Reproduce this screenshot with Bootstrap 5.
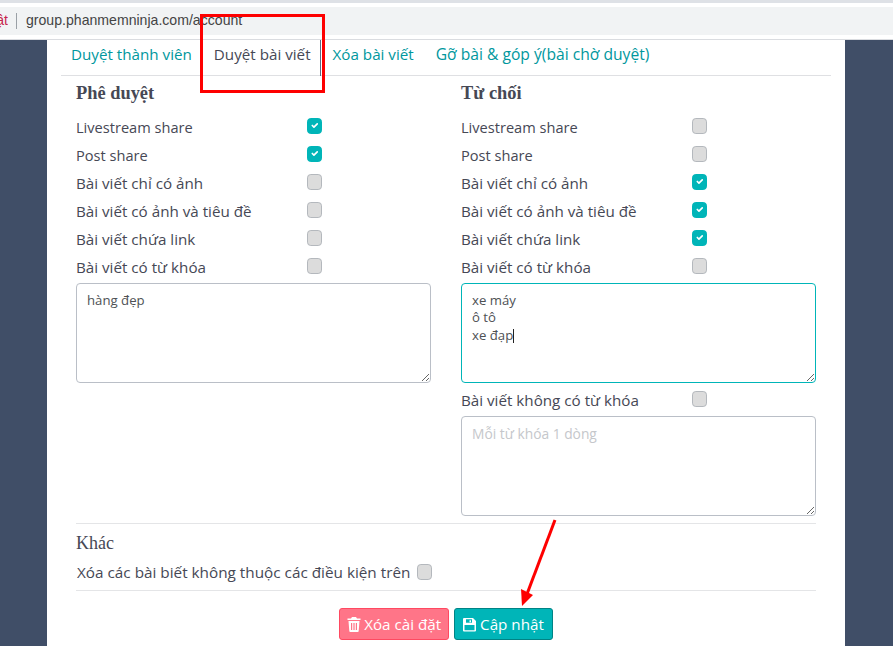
<!DOCTYPE html>
<html lang="vi">
<head>
  <meta charset="UTF-8">
  <meta name="viewport" content="width=device-width, initial-scale=1.0">
  <title>Duyệt bài viết</title>
  <link href="https://cdn.jsdelivr.net/npm/bootstrap@5.3.0/dist/css/bootstrap.min.css" rel="stylesheet">
  <style>
    html, body { height: 646px; overflow: hidden; }
    body {
      position: relative;
      background: #fff;
      color: #464855;
      font-family: "Open Sans", "Noto Sans", sans-serif;
      font-size: 15.2px;
    }
    /* browser chrome */
    .chrome-top { height: 3px; background: #dee1e6; }
    .chrome-bar {
      height: 28px;
      margin-top: 4px;
      background: #f1f3f4;
      font-family: "Liberation Sans", sans-serif;
      font-size: 14.1px;
      color: #444;
      white-space: nowrap;
      overflow: hidden;
    }
    .chrome-frag { width: 8px; color: #c7254e; display: flex; justify-content: flex-end; overflow: hidden; }
    .chrome-sep { width: 1px; height: 16px; background: #9aa0a6; margin: 0 9px 0 8px; }
    .chrome-line { height: 5px; border-bottom: 1px solid #dadce0; }

    .page-bg { background: #404e67; height: 606px; padding: 0 48px 0 47px; }
    .sheet { background: #fff; height: 100%; padding: 0 14px; }

    .tab-row { height: 36px; border-bottom: 1px solid #dfe0e3; flex-wrap: nowrap; }
    .tab-row .nav-link {
      color: #00979d;
      padding: 4px 10px 0;
      font-size: 15.2px;
      line-height: 20px;
      white-space: nowrap;
    }
    .tab-row .nav-link.is-on { color: #464855; border-right: 1px solid #5f6b85; padding: 4px 9px 0 12px; margin-right: 2px; height: 36px; }
    .tab-row .nav-link.tab-wide { font-size: 15.65px; padding-left: 12px; }

    .col-set { padding: 0 15px; width: 385px; flex: none; }
    .group-head {
      font-family: "Liberation Serif", serif;
      font-weight: 700;
      font-size: 18.4px;
      line-height: 20px;
      margin: 7px 0 11px;
    }
    .opt-row { height: 28px; margin: 0; }
    .opt-row span { width: 231px; flex: none; white-space: nowrap; line-height: 20px; margin-bottom: 2px; }
    .opt-row span.latin-txt { font-size: 14.6px; }
    .tick {
      width: 15px;
      height: 16px;
      margin: -5px 0 0;
      flex: none;
      background-color: #dcdcdc;
      border: 1px solid #b4b8bd;
      border-radius: 3px;
    }
    .tick:checked { background-color: #00b5b8; border-color: #00b5b8; background-size: 11px; }
    .box-wrap { position: relative; margin-top: 1px; }
    .word-box {
      display: block;
      width: 355px;
      height: 100px;
      padding: 8px 10px;
      border: 1px solid #babfc7;
      border-radius: 4px;
      font-size: 13.2px;
      line-height: 17.3px;
      color: #4e5154;
      outline: 0;
    }
    .word-box::placeholder { color: #c5c7cb; font-size: 13.8px; }
    .word-box.is-focus { border-color: #00b5b8; }
    .caret-bar { position: absolute; left: 52px; top: 46px; width: 1px; height: 14px; background: #222; }
    .rule-line { border-top: 1px solid #e4e5e7; margin: 7px 15px 0; }
    .other-head {
      font-family: "Liberation Serif", serif;
      font-size: 18px;
      line-height: 20px;
      margin: 9px 15px 9px;
      font-weight: 400;
    }
    .other-row { line-height: 20px; font-size: 15.3px; gap: 7px; }
    .other-row .tick { margin-top: 0; }
    .rule-low { margin-top: 8px; }
    .act-row { margin-top: 17px; gap: 5px; }
    .act-btn {
      height: 32px;
      font-size: 15.2px;
      padding: 0 7px;
      border-radius: 3px;
      color: #fff;
      white-space: nowrap;
    }
    .act-del { background: #ff7588; border: 1px solid #ff4961; }
    .act-save { background: #00b5b8; border: 1px solid #008385; padding-right: 8px; }
    .act-btn svg { width: 14px; height: 15px; margin-right: 3px; vertical-align: -2px; fill: #fff; }
    .act-save svg { width: 15px; }

    /* annotations drawn over the screenshot */
    .mark-box { position: absolute; left: 200px; top: 14px; width: 125px; height: 79px; border: 3px solid #fe0000; }
    .mark-arrow { position: absolute; left: 510px; top: 515px; }
  </style>
</head>
<body>
  <div class="chrome-top"></div>
  <div class="chrome-bar d-flex align-items-center mt-1">
    <span class="chrome-frag">ật</span>
    <span class="chrome-sep"></span>
    <span>group.phanmemninja.com/account</span>
  </div>
  <div class="chrome-line"></div>

  <div class="page-bg">
    <div class="sheet">
      <ul class="nav tab-row">
        <li class="nav-item"><a class="nav-link" href="#">Duyệt thành viên</a></li>
        <li class="nav-item"><a class="nav-link is-on" href="#">Duyệt bài viết</a></li>
        <li class="nav-item"><a class="nav-link" href="#">Xóa bài viết</a></li>
        <li class="nav-item"><a class="nav-link tab-wide" href="#">Gỡ bài &amp; góp ý(bài chờ duyệt)</a></li>
      </ul>

      <div class="d-flex">
        <div class="col-set">
          <h6 class="group-head">Phê duyệt</h6>
          <label class="opt-row d-flex align-items-center"><span class="latin-txt">Livestream share</span><input class="form-check-input tick" type="checkbox" checked></label>
          <label class="opt-row d-flex align-items-center"><span class="latin-txt">Post share</span><input class="form-check-input tick" type="checkbox" checked></label>
          <label class="opt-row d-flex align-items-center"><span>Bài viết chỉ có ảnh</span><input class="form-check-input tick" type="checkbox"></label>
          <label class="opt-row d-flex align-items-center"><span>Bài viết có ảnh và tiêu đề</span><input class="form-check-input tick" type="checkbox"></label>
          <label class="opt-row d-flex align-items-center"><span>Bài viết chứa link</span><input class="form-check-input tick" type="checkbox"></label>
          <label class="opt-row d-flex align-items-center"><span>Bài viết có từ khóa</span><input class="form-check-input tick" type="checkbox"></label>
          <div class="box-wrap"><textarea class="word-box">hàng đẹp</textarea></div>
        </div>
        <div class="col-set">
          <h6 class="group-head">Từ chối</h6>
          <label class="opt-row d-flex align-items-center"><span class="latin-txt">Livestream share</span><input class="form-check-input tick" type="checkbox"></label>
          <label class="opt-row d-flex align-items-center"><span class="latin-txt">Post share</span><input class="form-check-input tick" type="checkbox"></label>
          <label class="opt-row d-flex align-items-center"><span>Bài viết chỉ có ảnh</span><input class="form-check-input tick" type="checkbox" checked></label>
          <label class="opt-row d-flex align-items-center"><span>Bài viết có ảnh và tiêu đề</span><input class="form-check-input tick" type="checkbox" checked></label>
          <label class="opt-row d-flex align-items-center"><span>Bài viết chứa link</span><input class="form-check-input tick" type="checkbox" checked></label>
          <label class="opt-row d-flex align-items-center"><span>Bài viết có từ khóa</span><input class="form-check-input tick" type="checkbox"></label>
          <div class="box-wrap">
            <textarea class="word-box is-focus">xe máy
ô tô
xe đạp</textarea>
            <span class="caret-bar"></span>
          </div>
          <label class="opt-row d-flex align-items-center mt-1"><span>Bài viết không có từ khóa</span><input class="form-check-input tick" type="checkbox"></label>
          <div class="box-wrap"><textarea class="word-box" placeholder="Mỗi từ khóa 1 dòng"></textarea></div>
        </div>
      </div>

      <div class="rule-line"></div>
      <div class="other-head">Khác</div>
      <label class="other-row d-flex align-items-center mx-3"><span>Xóa các bài biết không thuộc các điều kiện trên</span><input class="form-check-input tick" type="checkbox"></label>
      <div class="rule-line rule-low"></div>

      <div class="d-flex justify-content-center act-row">
        <button class="btn act-btn act-del" type="button"><svg viewBox="0 0 14 15"><path d="M5 0h4l1 1.500h3.500V3H.5V1.500H4zM1.500 4h11l-.8 10a1 1 0 0 1-1 1H3.300a1 1 0 0 1-1-1zM4 6v7h1.200V6zm2.400 0v7h1.200V6zm2.400 0v7H10V6z"/></svg>Xóa cài đặt</button>
        <button class="btn act-btn act-save" type="button"><svg viewBox="0 0 14 15"><path fill-rule="evenodd" d="M1.500 1h9L13.500 4v9.500a1 1 0 0 1-1 1h-11a1 1 0 0 1-1-1V2a1 1 0 0 1 1-1zM3.500 2.300v3.500h6V2.300zM2 8v5.300h10V8zm5-4.800h1.500v2H7z"/></svg>Cập nhật</button>
      </div>
    </div>
  </div>

  <div class="mark-box"></div>
  <svg class="mark-arrow" width="50" height="95" viewBox="0 0 50 95">
    <path d="M45 5 L17 79" stroke="#fe0000" stroke-width="3" fill="none"/>
    <path d="M12 91 L11 74 L23 80 Z" fill="#fe0000"/>
  </svg>
</body>
</html>
